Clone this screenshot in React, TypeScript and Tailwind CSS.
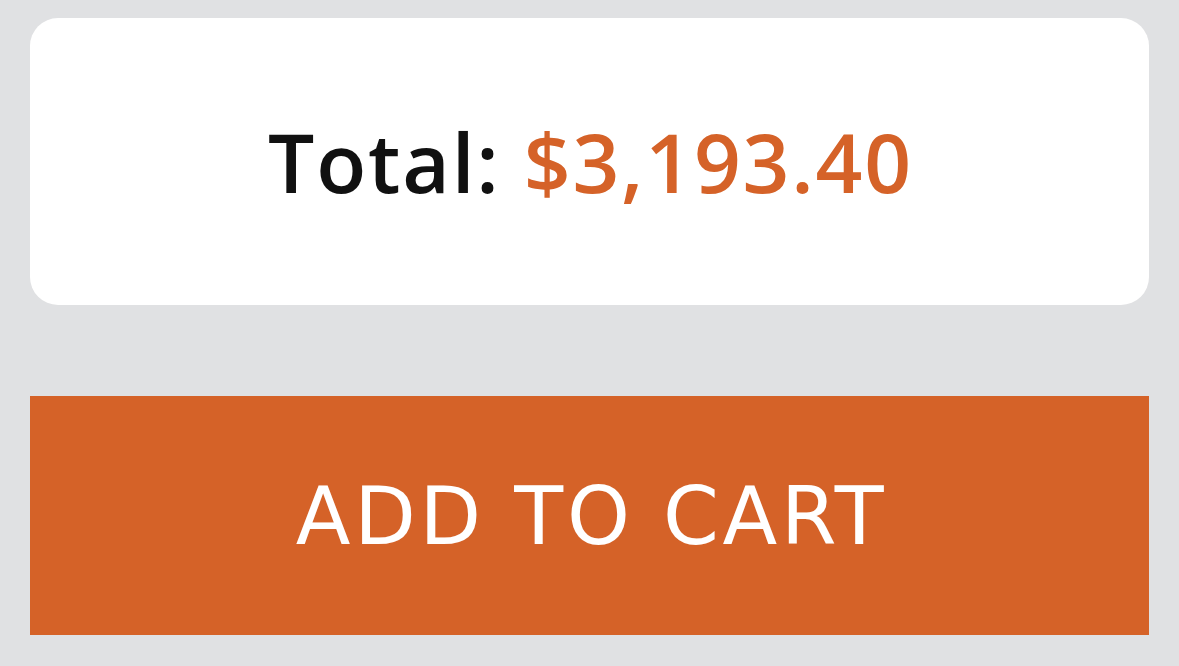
export default function App() {
  return (
    <div className="min-h-[666px] w-full bg-[#e0e1e3] px-[30px] pt-[18px] pb-[31px] flex flex-col">
      {/* total card */}
      <div className="h-[287px] rounded-[28px] bg-white flex items-center justify-center">
        <p className="text-[82px] leading-none font-['Open_Sans',sans-serif] font-semibold text-[#111111] tracking-[1.8px] pl-[2px] pb-[2px]">
          Total: <span className="text-[#d56228]">$3,193.40</span>
        </p>
      </div>

      {/* add to cart */}
      <button className="mt-[91px] h-[239px] w-full bg-[#d56228] text-white flex items-center justify-center">
        <span className="text-[80px] leading-none font-['DejaVu_Sans',sans-serif] font-normal uppercase tracking-[3.8px] pl-[4px] pt-[2px]">
          Add to Cart
        </span>
      </button>
    </div>
  );
}
